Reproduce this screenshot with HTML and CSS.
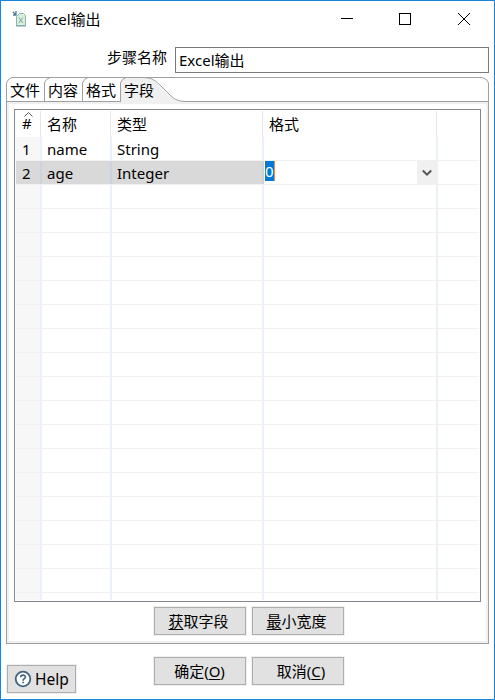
FILE: index.html
```html
<!DOCTYPE html>
<html lang="zh-CN">
<head>
<meta charset="utf-8">
<title>Excel输出</title>
<link rel="stylesheet" href="styles.css">
</head>
<body>
<div class="window">
  <header class="titlebar">
    <svg class="app-icon" width="16" height="18" viewBox="0 0 16 18">
      <path d="M4.500 5.500 7.500 2.500H11.500L13.500 4.500V14.500H4.500Z" fill="#d8f0d5" stroke="#8fb1b4"/>
      <path d="M4 15H14" stroke="#7f9fae"/>
      <path d="M6.800 6.500 10.800 12M10.800 6.500 6.800 12" stroke="#7fa3ab" fill="none"/>
      <path d="M.8.8 3.800 3.800M4 0V4H1" stroke="#547c98" stroke-width="1.300" fill="none"/>
    </svg>
    <span class="title">Excel输出</span>
    <svg class="controls" width="130" height="14" viewBox="0 0 130 14" fill="none" stroke="#000">
      <path d="M0 6.500H12"/>
      <rect x="58.500" y="1.500" width="11" height="11"/>
      <path d="M117 1 129 13M129 1 117 13"/>
    </svg>
  </header>
  <div class="step">
    <label class="step-label" for="step">步骤名称</label>
    <div class="step-input" id="step">Excel输出</div>
  </div>
  <main class="folder">
    <nav class="tabs">
      <svg class="tab-lines" width="483" height="27" viewBox="0 0 483 27" fill="none" stroke="#a0a0a0">
        <path d="M115 27V6Q115 .5 121 .5H137C156 .5 158 24.500 181 24.500V27Z" fill="#f0f0f0" stroke="none"/>
        <path d="M.5 27V6L2.500 2.500 6 .5H476L480.500 2.500 482.500 6V27"/>
        <path d="M38.500 24V6L40.500 2.500 44 .5M76.500 24V6L78.500 2.500 82 .5M114.500 24V6L116.500 2.500 120 .5"/>
        <path d="M137 .5C146 .5 150 4 155 9L164 18C169 23 173 24.500 181 24.500"/>
        <path d="M1 24.500H115M181 24.500H482"/>
      </svg>
      <span class="tab">文件</span><span class="tab">内容</span><span class="tab">格式</span><span class="tab">字段</span>
    </nav>
    <section class="panel">
      <div class="table">
        <div class="row head">
          <div class="cell num"><svg class="sort" width="9" height="5" viewBox="0 0 9 5"><path d="M.5 4.500 4.500.5 8.500 4.500" fill="none" stroke="#555"/></svg>#</div>
          <div class="cell">名称</div><div class="cell">类型</div><div class="cell">格式</div><div class="cell"></div>
        </div>
        <div class="row"><div class="cell num">1</div><div class="cell">name</div><div class="cell">String</div><div class="cell"></div><div class="cell"></div></div>
        <div class="row selected"><div class="cell num">2</div><div class="cell">age</div><div class="cell">Integer</div>
          <div class="cell combo"><span class="marked">0</span><span class="drop"><svg width="10" height="8" viewBox="0 0 10 8"><path d="M.8 1.500 5 5.700 9.200 1.500" fill="none" stroke="#555" stroke-width="2"/></svg></span></div><div class="cell"></div></div>
        <div class="row"><div class="cell num"></div><div class="cell"></div><div class="cell"></div><div class="cell"></div><div class="cell"></div></div>
        <div class="row"><div class="cell num"></div><div class="cell"></div><div class="cell"></div><div class="cell"></div><div class="cell"></div></div>
        <div class="row"><div class="cell num"></div><div class="cell"></div><div class="cell"></div><div class="cell"></div><div class="cell"></div></div>
        <div class="row"><div class="cell num"></div><div class="cell"></div><div class="cell"></div><div class="cell"></div><div class="cell"></div></div>
        <div class="row"><div class="cell num"></div><div class="cell"></div><div class="cell"></div><div class="cell"></div><div class="cell"></div></div>
        <div class="row"><div class="cell num"></div><div class="cell"></div><div class="cell"></div><div class="cell"></div><div class="cell"></div></div>
        <div class="row"><div class="cell num"></div><div class="cell"></div><div class="cell"></div><div class="cell"></div><div class="cell"></div></div>
        <div class="row"><div class="cell num"></div><div class="cell"></div><div class="cell"></div><div class="cell"></div><div class="cell"></div></div>
        <div class="row"><div class="cell num"></div><div class="cell"></div><div class="cell"></div><div class="cell"></div><div class="cell"></div></div>
        <div class="row"><div class="cell num"></div><div class="cell"></div><div class="cell"></div><div class="cell"></div><div class="cell"></div></div>
        <div class="row"><div class="cell num"></div><div class="cell"></div><div class="cell"></div><div class="cell"></div><div class="cell"></div></div>
        <div class="row"><div class="cell num"></div><div class="cell"></div><div class="cell"></div><div class="cell"></div><div class="cell"></div></div>
        <div class="row"><div class="cell num"></div><div class="cell"></div><div class="cell"></div><div class="cell"></div><div class="cell"></div></div>
        <div class="row"><div class="cell num"></div><div class="cell"></div><div class="cell"></div><div class="cell"></div><div class="cell"></div></div>
        <div class="row"><div class="cell num"></div><div class="cell"></div><div class="cell"></div><div class="cell"></div><div class="cell"></div></div>
        <div class="row"><div class="cell num"></div><div class="cell"></div><div class="cell"></div><div class="cell"></div><div class="cell"></div></div>
        <div class="row"><div class="cell num"></div><div class="cell"></div><div class="cell"></div><div class="cell"></div><div class="cell"></div></div>
        <div class="row last"><div class="cell num"></div><div class="cell"></div><div class="cell"></div><div class="cell"></div><div class="cell"></div></div>
      </div>
      <div class="actions">
        <button class="btn wide"><u>获</u>取字段</button>
        <button class="btn wide"><u>最</u>小宽度</button>
      </div>
    </section>
  </main>
  <footer class="footer">
    <button class="btn help">
      <svg width="18" height="18" viewBox="0 0 18 18" fill="none" stroke="#42637f"><circle cx="9" cy="9" r="7.300" fill="#fff" stroke-width="1.800"/><path d="M6.700 7.200C6.700 4.500 11.400 4.500 11.400 7.100C11.400 8.800 9.100 8.700 9.100 10.700" stroke-width="1.600"/><path d="M9.100 11.700V13.300" stroke-width="1.700"/></svg>
      <span>Help</span>
    </button>
    <button class="btn">确定(<u>O</u>)</button>
    <button class="btn cancel">取消(<u>C</u>)</button>
  </footer>
</div>
</body>
</html>
```
FILE: styles.css
```css
* { box-sizing: border-box; }
body {
  margin: 0;
  background: #fff;
  color: #000;
  font: 15px/20px "Noto Sans", "Noto Sans CJK SC", sans-serif;
}
.window {
  width: 495px;
  height: 700px;
  border: 1px solid #1883d7;
  display: flex;
  flex-direction: column;
}
.titlebar {
  height: 46px;
  flex: none;
  display: flex;
  align-items: flex-start;
  padding: 10px 23px 0 11px;
}
.title { margin: -2px auto 0 7px; }
.controls { margin-top: 1px; }
.step {
  height: 30px;
  flex: none;
  display: flex;
  padding: 0 5px 0 106px;
}
.step-label { width: 68px; white-space: nowrap; }
.step-input {
  flex: 1;
  height: 26px;
  border: 1px solid #7a7a7a;
  padding: 2px 3px;
}
.folder {
  width: 483px;
  height: 567px;
  flex: none;
  margin-left: 5px;
}
.tabs {
  position: relative;
  height: 25px;
  display: flex;
  padding-left: 4px;
}
.tab-lines { position: absolute; left: 0; top: 0; }
.tab { position: relative; width: 38px; padding-top: 3px; }
.panel {
  position: relative;
  height: 542px;
  border: 1px solid #a0a0a0;
  border-top: 0;
  box-shadow: inset 0 0 0 2px #f0f0f0;
  padding: 7px 7px 0;
}
.table {
  width: 467px;
  height: 493px;
  border: 1px solid #828790;
  padding: 1px;
  overflow: hidden;
}
.row {
  display: grid;
  grid-template-columns: 26px 70px 152px 174px 1fr;
  height: 24px;
  border-bottom: 1px solid #f0f0f0;
}
.cell {
  border-right: 2px solid #ebf1fb;
  padding: 2px 0 0 5px;
  overflow: hidden;
}
.cell:last-child { border-right: 0; }
.num { background: #f7f7f7; padding-left: 6px; }
.head { height: 26px; border: 0; }
.head .cell {
  position: relative;
  border-right: 1px solid #e5e5e5;
  margin-right: 1px;
  padding-top: 3px;
}
.head .cell:last-child { border-right: 0; }
.head .num { background: none; padding-top: 2px; }
.sort { position: absolute; left: 8px; top: 1px; }
.selected .cell:nth-child(-n+3) { background: #d9d9d9; border-color: #cdd3dc; }
.selected .num { background: #cbcbcb; }
.last { height: 7px; border: 0; }
.combo {
  display: flex;
  justify-content: space-between;
  padding: 0 0 0 1px;
  border: 0;
}
.marked {
  width: 10px;
  height: 20px;
  background: #0078d7;
  color: #fff;
  border-right: 1px solid #ff8728;
}
.drop {
  width: 21px;
  height: 23px;
  display: flex;
  align-items: center;
  justify-content: center;
  padding-right: 2px;
  background: #f0f0f0;
}
.actions { display: flex; gap: 6px; padding: 5px 0 0 140px; }
.btn {
  width: 92px;
  height: 28px;
  flex: none;
  padding: 0 1px 0 0;
  border: 1px solid #adadad;
  background: #e1e1e1;
  box-shadow: 0 0 0 1px #f0f0f0;
  color: #000;
  font: inherit;
}
.wide { padding-right: 3px; }
.btn u { text-underline-offset: 2px; text-decoration-thickness: 1px; text-decoration-skip-ink: none; }
.footer { display: flex; align-items: flex-start; padding: 13px 0 0 6px; gap: 6px; }
.help {
  width: 69px;
  margin: 8px 72px 0 0;
  display: flex;
  align-items: center;
  gap: 3px;
  padding-left: 6px;
}
.help span { font-size: 15.5px; }
.cancel { padding-left: 7px; }
```
